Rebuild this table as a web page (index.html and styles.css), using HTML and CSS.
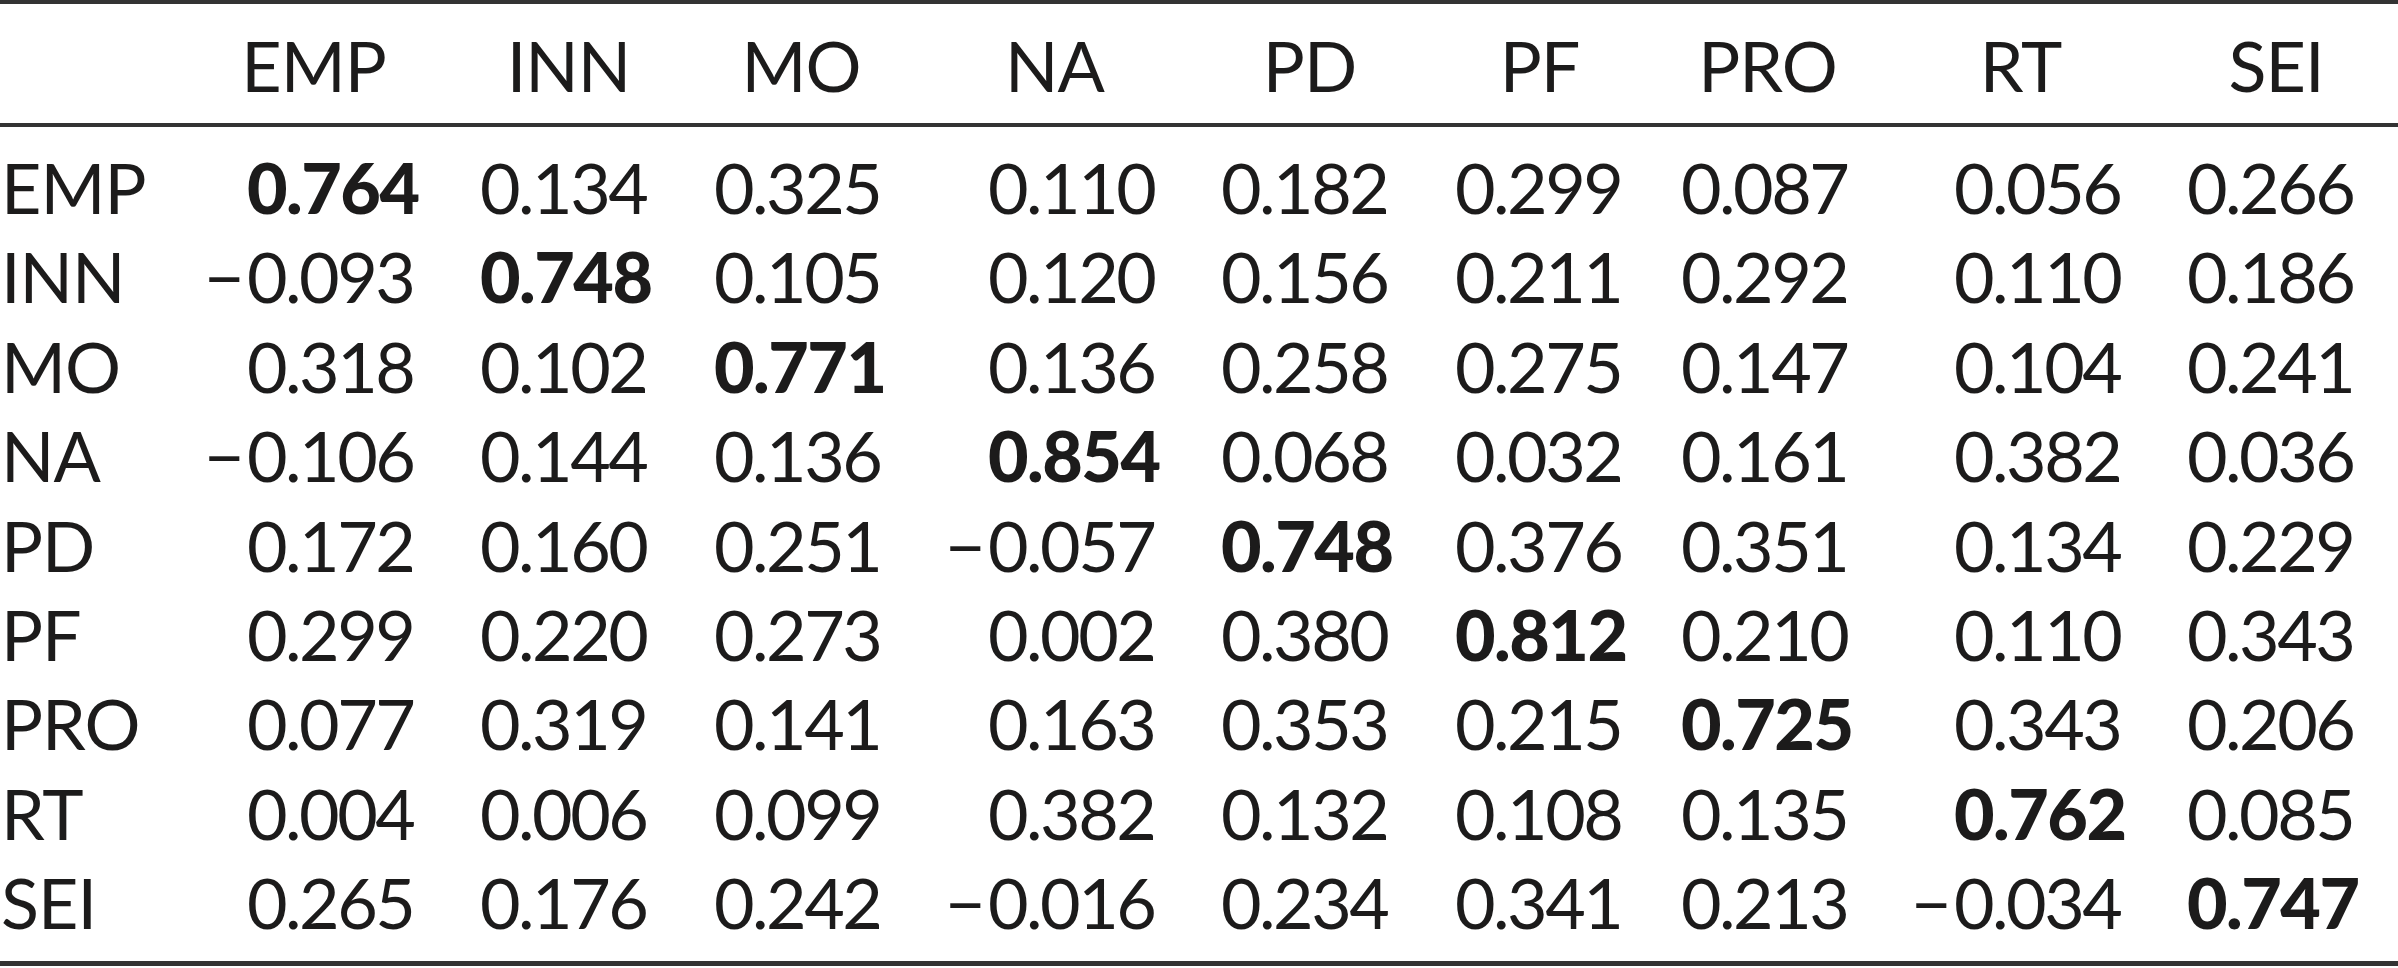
FILE: index.html
```html
<!DOCTYPE html>
<html lang="en">
<head>
<meta charset="utf-8">
<title>Discriminant validity matrix</title>
<link rel="stylesheet" href="styles.css">
</head>
<body>
<div class="tbl">
  <div class="row head">
    <div class="lab"></div>
    <div class="h">EMP</div>
    <div class="h">INN</div>
    <div class="h">MO</div>
    <div class="h">NA</div>
    <div class="h">PD</div>
    <div class="h">PF</div>
    <div class="h">PRO</div>
    <div class="h">RT</div>
    <div class="h">SEI</div>
  </div>
  <div class="body">
    <div class="row">
      <div class="lab">EMP</div>
      <div class="n"><span class="s ph">−</span><b>0.764</b></div>
      <div class="n">0.134</div>
      <div class="n">0.325</div>
      <div class="n"><span class="s ph">−</span>0.110</div>
      <div class="n">0.182</div>
      <div class="n">0.299</div>
      <div class="n">0.087</div>
      <div class="n"><span class="s ph">−</span>0.056</div>
      <div class="n">0.266</div>
    </div>
    <div class="row">
      <div class="lab">INN</div>
      <div class="n"><span class="s">−</span>0.093</div>
      <div class="n"><b>0.748</b></div>
      <div class="n">0.105</div>
      <div class="n"><span class="s ph">−</span>0.120</div>
      <div class="n">0.156</div>
      <div class="n">0.211</div>
      <div class="n">0.292</div>
      <div class="n"><span class="s ph">−</span>0.110</div>
      <div class="n">0.186</div>
    </div>
    <div class="row">
      <div class="lab">MO</div>
      <div class="n"><span class="s ph">−</span>0.318</div>
      <div class="n">0.102</div>
      <div class="n"><b>0.771</b></div>
      <div class="n"><span class="s ph">−</span>0.136</div>
      <div class="n">0.258</div>
      <div class="n">0.275</div>
      <div class="n">0.147</div>
      <div class="n"><span class="s ph">−</span>0.104</div>
      <div class="n">0.241</div>
    </div>
    <div class="row">
      <div class="lab">NA</div>
      <div class="n"><span class="s">−</span>0.106</div>
      <div class="n">0.144</div>
      <div class="n">0.136</div>
      <div class="n"><span class="s ph">−</span><b>0.854</b></div>
      <div class="n">0.068</div>
      <div class="n">0.032</div>
      <div class="n">0.161</div>
      <div class="n"><span class="s ph">−</span>0.382</div>
      <div class="n">0.036</div>
    </div>
    <div class="row">
      <div class="lab">PD</div>
      <div class="n"><span class="s ph">−</span>0.172</div>
      <div class="n">0.160</div>
      <div class="n">0.251</div>
      <div class="n"><span class="s">−</span>0.057</div>
      <div class="n"><b>0.748</b></div>
      <div class="n">0.376</div>
      <div class="n">0.351</div>
      <div class="n"><span class="s ph">−</span>0.134</div>
      <div class="n">0.229</div>
    </div>
    <div class="row">
      <div class="lab">PF</div>
      <div class="n"><span class="s ph">−</span>0.299</div>
      <div class="n">0.220</div>
      <div class="n">0.273</div>
      <div class="n"><span class="s ph">−</span>0.002</div>
      <div class="n">0.380</div>
      <div class="n"><b>0.812</b></div>
      <div class="n">0.210</div>
      <div class="n"><span class="s ph">−</span>0.110</div>
      <div class="n">0.343</div>
    </div>
    <div class="row">
      <div class="lab">PRO</div>
      <div class="n"><span class="s ph">−</span>0.077</div>
      <div class="n">0.319</div>
      <div class="n">0.141</div>
      <div class="n"><span class="s ph">−</span>0.163</div>
      <div class="n">0.353</div>
      <div class="n">0.215</div>
      <div class="n"><b>0.725</b></div>
      <div class="n"><span class="s ph">−</span>0.343</div>
      <div class="n">0.206</div>
    </div>
    <div class="row">
      <div class="lab">RT</div>
      <div class="n"><span class="s ph">−</span>0.004</div>
      <div class="n">0.006</div>
      <div class="n">0.099</div>
      <div class="n"><span class="s ph">−</span>0.382</div>
      <div class="n">0.132</div>
      <div class="n">0.108</div>
      <div class="n">0.135</div>
      <div class="n"><span class="s ph">−</span><b>0.762</b></div>
      <div class="n">0.085</div>
    </div>
    <div class="row">
      <div class="lab">SEI</div>
      <div class="n"><span class="s ph">−</span>0.265</div>
      <div class="n">0.176</div>
      <div class="n">0.242</div>
      <div class="n"><span class="s">−</span>0.016</div>
      <div class="n">0.234</div>
      <div class="n">0.341</div>
      <div class="n">0.213</div>
      <div class="n"><span class="s">−</span>0.034</div>
      <div class="n"><b>0.747</b></div>
    </div>
  </div>
</div>
</body>
</html>
```

FILE: styles.css
```css
html, body {
  margin: 0;
  padding: 0;
  background: #ffffff;
}

body {
  font-family: "Lato", "Open Sans", sans-serif;
  font-size: 70px;
  color: #1c1b1b;
}

.tbl {
  width: 2398px;
  border-top: 4px solid #333333;
  border-bottom: 5px solid #333333;
}

.row {
  display: grid;
  grid-template-columns: 146px 219px 177px 174px 219px 177px 169px 173px 219px 178px;
  column-gap: 57px;
  padding-left: 1px;
  line-height: 89.4px;
  height: 89.4px;
}

.head {
  padding-top: 17px;
  padding-bottom: 12.4px;
  border-bottom: 4px solid #333333;
}

.body {
  padding-top: 16.2px;
  padding-bottom: 13.4px;
}

.lab {
  white-space: nowrap;
  letter-spacing: -1px;
}

.h {
  text-align: center;
  white-space: nowrap;
  letter-spacing: -1px;
}

.n {
  text-align: left;
  white-space: nowrap;
  letter-spacing: -2.5px;
}

.n b {
  font-weight: 900;
  letter-spacing: -1.5px;
}

.s {
  display: inline-block;
  width: 43px;
  text-align: left;
  letter-spacing: 0;
}

.s.ph {
  visibility: hidden;
}
```
